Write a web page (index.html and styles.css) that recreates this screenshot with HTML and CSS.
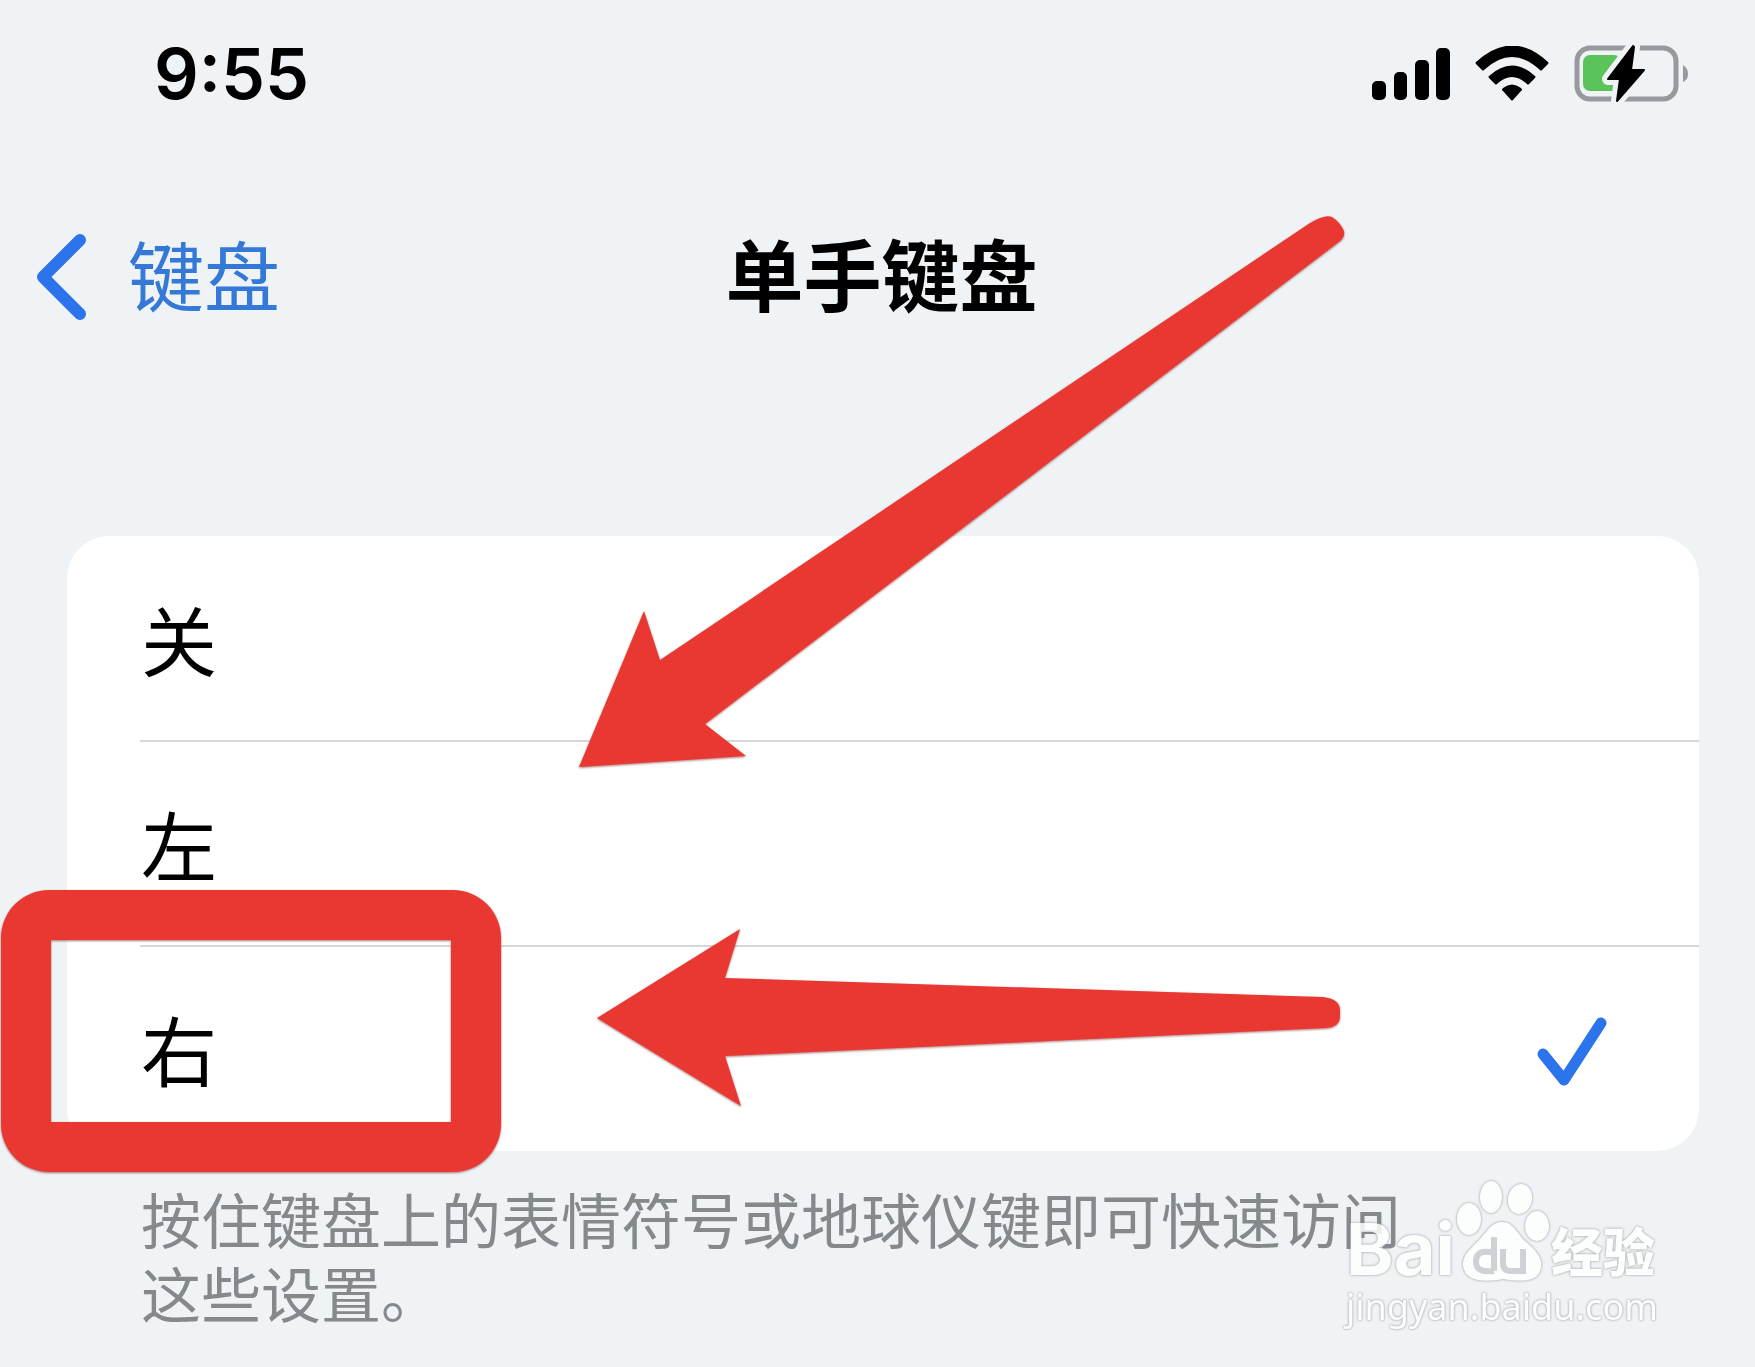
FILE: index.html
```html
<!DOCTYPE html>
<html lang="zh-CN">
<head>
<meta charset="utf-8">
<meta name="viewport" content="width=device-width, initial-scale=1">
<title>单手键盘</title>
<link rel="stylesheet" href="styles.css">
</head>
<body>
<div class="screen">
  <header class="status">
    <time class="clock">9:55</time>
    <div class="indicators">
      <svg width="78" height="54" viewBox="0 0 78 54" aria-label="信号">
        <rect x="0" y="34" width="14" height="19" rx="5"/>
        <rect x="22" y="25" width="13" height="28" rx="5"/>
        <rect x="43" y="13" width="14" height="40" rx="5"/>
        <rect x="64" y="1" width="14" height="52" rx="5"/>
      </svg>
      <svg width="74" height="56" viewBox="0 0 74 56" aria-label="无线网络">
        <path d="M1 16Q37 -17 73 16Q74 17 73 18L67 24Q66 25 65 24Q37 -2 9 24Q8 25 7 24L1 18Q0 17 1 16Z"/>
        <path d="M14 30Q37 9 60 30Q61 31 60 32L54 38Q53 39 52 38Q37 24 22 38Q21 39 20 38L14 32Q13 31 14 30Z"/>
        <path d="M28 42Q37 35 46 42Q48 44 46 45L38 54Q37 55 36 54L28 45Q26 44 28 42Z"/>
      </svg>
      <svg class="battery" width="115" height="58" viewBox="0 0 115 58" aria-label="正在充电">
        <rect x="3" y="3" width="99" height="51" rx="13" fill="none" stroke="#98999d" stroke-width="5"/>
        <path d="M109 20Q114 23 114 29T109 37Z" fill="#98999d"/>
        <rect x="9" y="10" width="38" height="36" rx="7" fill="#5ac45b"/>
        <path class="bolt" d="M59 1L34 34H46L43 56L70 25H57L60 2Z"/>
        <path d="M59 1L34 34H46L43 56L70 25H57L60 2Z" stroke="#000" stroke-width="2" stroke-linejoin="round"/>
      </svg>
    </div>
  </header>

  <nav class="navbar">
    <a class="back" href="#keyboard">
      <svg width="52" height="88" viewBox="0 0 52 88" aria-hidden="true"><path d="M44 6L7 43L44 80" fill="none" stroke="#2c74eb" stroke-width="12" stroke-linecap="round" stroke-linejoin="round"/></svg>
      <span>键盘</span>
    </a>
    <h1 class="title">单手键盘</h1>
  </nav>

  <main class="content">
    <div class="options" role="radiogroup" aria-label="单手键盘">
      <label class="option"><input type="radio" name="hand"><span>关</span></label>
      <label class="option"><input type="radio" name="hand"><span>左</span></label>
      <label class="option">
        <input type="radio" name="hand" checked><span>右</span>
        <svg class="check" width="72" height="74" viewBox="0 0 72 74" aria-hidden="true"><path d="M7 38L28 64L65 7" fill="none" stroke="#2c74eb" stroke-width="11" stroke-linecap="round" stroke-linejoin="round"/></svg>
      </label>
    </div>
    <p class="note">按住键盘上的表情符号或地球仪键即可快速访问这些设置。</p>
  </main>

  <svg class="arrows" width="1400" height="1200" viewBox="0 0 1400 1200" aria-hidden="true">
    <path d="M579 767L644 611L660 660L1310 223Q1325 214 1332 217Q1340 222 1344 231Q1345 237 1340 241L705 724L746 756Z"/>
    <path d="M597 1018L740 929L725 978L1323 997Q1340 999 1340 1010V1016Q1340 1027 1326 1028L725 1056L741 1106Z"/>
  </svg>
  <div class="highlight"></div>

  <div class="watermark">
    <div class="brand">
      <span class="bai">Bai</span>
      <svg class="paw" width="96" height="104" viewBox="0 0 96 104" aria-hidden="true">
        <ellipse cx="14" cy="40" rx="12" ry="16"/>
        <ellipse cx="36" cy="18" rx="11" ry="16"/>
        <ellipse cx="65" cy="20" rx="12" ry="15" transform="rotate(12 65 20)"/>
        <ellipse cx="82" cy="47" rx="12" ry="15"/>
        <path d="M47 43C58 43 62 54 70 62C80 71 88 78 86 89C83 103 68 103 48 100C31 103 11 104 8 87C7 75 17 69 26 59C33 51 37 43 47 43Z"/>
        <path class="du" d="M39 58V92M39 74Q21 69 21 83Q21 94 39 92M48 70V84Q48 92 56 92H68V70"/>
      </svg>
      <span class="jingyan">经验</span>
    </div>
    <div class="site">jingyan.baidu.com</div>
  </div>
</div>
</body>
</html>
```
FILE: styles.css
```css
* { box-sizing: border-box; }

body {
  margin: 0;
  background: #eff3f6;
  color: #000;
  font-family: "Inter", "Noto Sans CJK SC", sans-serif;
}

.screen {
  position: relative;
  min-height: 100vh;
  overflow: hidden;
}

.status {
  display: flex;
  justify-content: space-between;
  align-items: center;
  height: 148px;
  padding: 0 66px 0 154px;
}

.clock {
  font-size: 70px;
  font-weight: 600;
  line-height: 80px;
}

.indicators {
  display: flex;
  align-items: center;
  gap: 25px;
}

.bolt {
  fill: #eff3f6;
  stroke: #eff3f6;
  stroke-width: 12px;
  stroke-linejoin: round;
}

.navbar {
  display: grid;
  grid-template-columns: 1fr auto 1fr;
  align-items: center;
  height: 260px;
  padding: 0 28px 0 36px;
}

.back {
  display: flex;
  align-items: center;
  gap: 40px;
  color: #3478d8;
  font-size: 76px;
  line-height: 100px;
  text-decoration: none;
}

.title {
  margin: 0;
  font-size: 78px;
  font-weight: 700;
  line-height: 100px;
}

.content { padding: 128px 56px 0 67px; }

.options {
  overflow: hidden;
  border-radius: 42px;
  background: #fff;
}

.option {
  position: relative;
  display: flex;
  justify-content: space-between;
  align-items: center;
  height: 205px;
  padding: 8px 91px 0 74px;
  font-size: 76px;
  line-height: 100px;
}

.option + .option::before {
  content: "";
  position: absolute;
  top: -1px;
  right: 0;
  left: 73px;
  height: 2px;
  background: #d5d8da;
}

.option input {
  position: absolute;
  inset: 0;
  margin: 0;
  appearance: none;
}

.note {
  margin: 34px 0 0;
  padding: 0 240px 0 74px;
  color: #85898c;
  font-size: 60px;
  line-height: 74px;
}

.arrows {
  position: absolute;
  top: 0;
  left: 0;
  fill: #e93832;
  filter: drop-shadow(0 1px 1px #6008);
  pointer-events: none;
}

.highlight {
  position: absolute;
  top: 890px;
  left: 1px;
  width: 500px;
  height: 282px;
  border: 50px solid #e93832;
  border-radius: 48px;
  filter: drop-shadow(0 1px 1px #6008);
  pointer-events: none;
}

.watermark {
  position: absolute;
  right: 94px;
  bottom: 36px;
  opacity: 0.85;
  color: #fff;
  filter: drop-shadow(0 0 1px #8889) drop-shadow(0 0 1px #8888);
}

.brand {
  display: flex;
  align-items: flex-end;
  justify-content: space-between;
  padding-right: 6px;
}

.bai {
  font-size: 72px;
  font-weight: 700;
  line-height: 68px;
}

.paw { fill: #fff; }

.du {
  fill: none;
  stroke: #c9cdd2;
  stroke-width: 6px;
}

.jingyan {
  font-size: 52px;
  font-weight: 900;
  line-height: 58px;
}

.site {
  font-family: "Noto Sans", sans-serif;
  font-size: 36px;
  line-height: 48px;
}
```
